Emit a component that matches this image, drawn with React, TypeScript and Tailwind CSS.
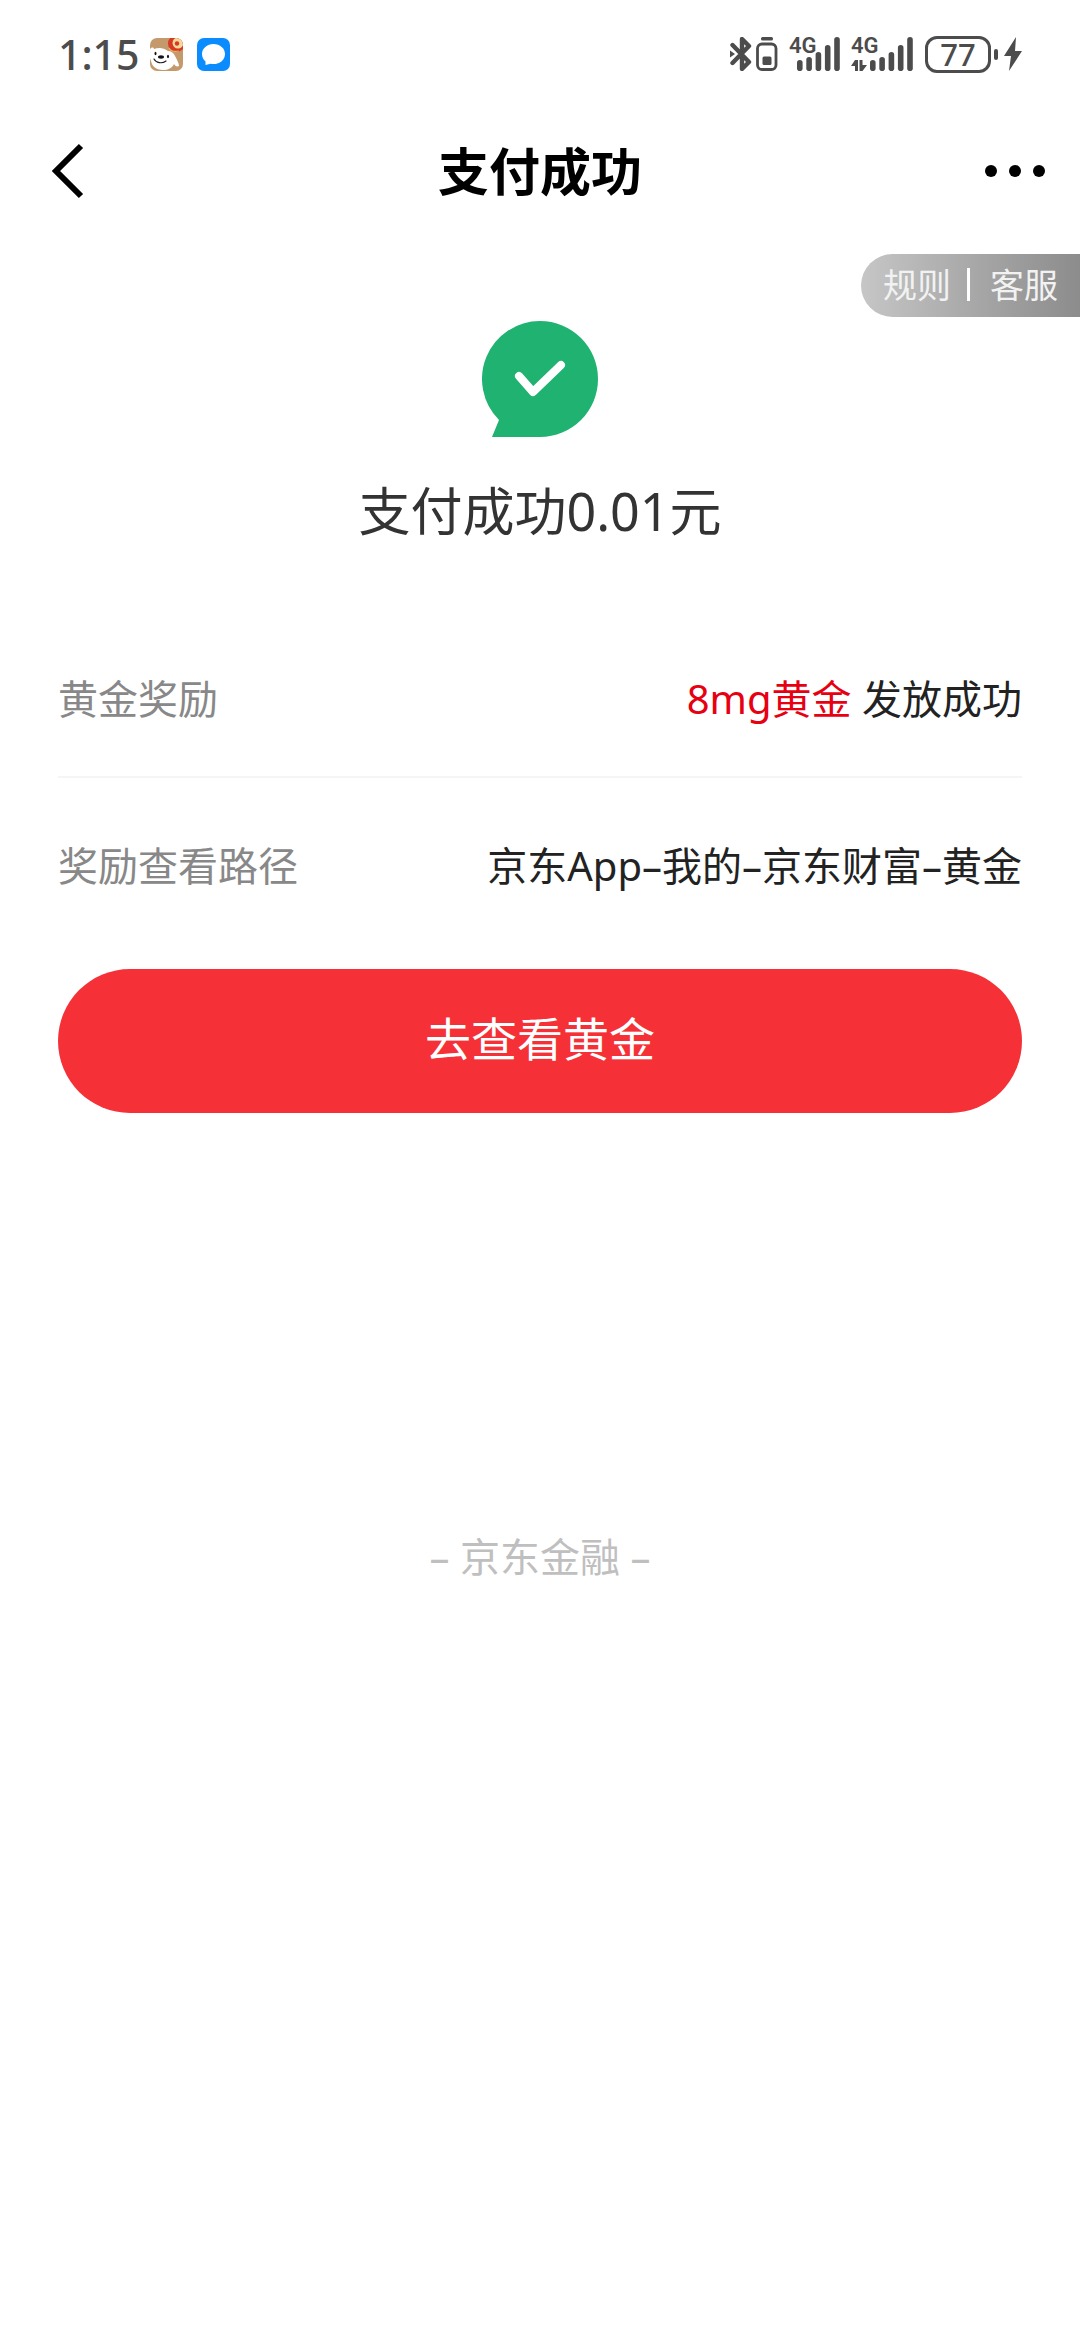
const SANS = "font-['Noto_Sans','Noto_Sans_CJK_SC',sans-serif]";

function DogAppIcon() {
  return (
    <svg viewBox="0 0 33 33" className="h-[33px] w-[33px]" aria-hidden="true">
      <defs>
        <clipPath id="dog-tile">
          <rect width="33" height="33" rx="7" />
        </clipPath>
      </defs>
      <g clipPath="url(#dog-tile)">
        <rect width="33" height="33" fill="#c49a6c" />
        <path
          d="M-1 13c1-3 4-5 5-2 5-2 10-1 14 2 3 0 6 2 7 5 2 4 4 7 4 10-2 1-4 0-5-2-2 4-6 6-11 6C7 32 2 29 1 23c-1-3-3-6-2-10z"
          fill="#fff"
        />
        <circle cx="26.500" cy="5.500" r="8.500" fill="#d63a22" />
        <circle cx="28" cy="5" r="5.500" fill="#f6d79c" />
        <circle cx="27" cy="5.500" r="2.200" fill="#d63a22" />
        <path d="M19 10c2 3 6 4 10 3" stroke="#f0b060" strokeWidth="1.200" fill="none" />
        <ellipse cx="11" cy="19" rx="3" ry="1.700" fill="#111" />
        <ellipse cx="5.500" cy="15.500" rx="1" ry="1.800" fill="#111" />
        <ellipse cx="18" cy="18.500" rx="1" ry="1.800" fill="#111" />
        <path d="M4 21c2 4 8 5 12 2" stroke="#222" strokeWidth="1.200" fill="none" strokeLinecap="round" />
      </g>
    </svg>
  );
}

function MessageAppIcon() {
  return (
    <svg viewBox="0 0 33 33" className="h-[33px] w-[33px]" aria-hidden="true">
      <rect width="33" height="33" rx="7" fill="#0a8cff" />
      <path
        d="M16.500 6C10 6 5 10.500 5 16c0 3.300 1.400 5.700 3.500 7.500V27l5-1.200c1 .2 2 .3 3 .3 6.500 0 11.500-4.500 11.500-10.100S23 6 16.500 6z"
        fill="#fff"
      />
    </svg>
  );
}

function BluetoothIcon() {
  return (
    <svg viewBox="0 0 22 34" className="h-[34px] w-[22px]" aria-hidden="true" fill="none">
      <path
        d="M2.500 8l16.500 17-7 7V2l7 7L2.500 26"
        stroke="#4c4c4c"
        strokeWidth="4.400"
        strokeLinecap="round"
        strokeLinejoin="round"
      />
      <path d="M0 13.500l5 3.500-5 3.500z" fill="#4c4c4c" />
    </svg>
  );
}

function DeviceBatteryIcon() {
  return (
    <svg viewBox="0 0 22 34" className="h-[34px] w-[22px]" aria-hidden="true">
      <rect x="5" y="0" width="12" height="3.500" rx="1.500" fill="#4c4c4c" />
      <rect x="1.500" y="7" width="18.500" height="25.500" rx="4.500" fill="none" stroke="#4c4c4c" strokeWidth="2.800" />
      <rect x="6.500" y="19.500" width="9" height="8.500" rx="1.500" fill="#4c4c4c" />
    </svg>
  );
}

function Signal({ data }: { data?: boolean }) {
  const tops = [23, 20, 15, 8, 0];
  const start = data ? 19 : 8;
  return (
    <div className={data ? "relative h-[34px] w-[62px]" : "relative h-[34px] w-[52px]"}>
      <svg viewBox={data ? "0 0 62 34" : "0 0 52 34"} className="h-full w-full" aria-hidden="true">
        {tops.map((t, i) => (
          <rect key={t} x={start + i * 9.3} y={t} width="5.600" height={34 - t} rx="2.800" fill="#4c4c4c" />
        ))}
        {data && <path d="M0 29l4-6h3v11H4v-5zM8.500 23h3v5H16l-4.500 6h-3z" fill="#4c4c4c" />}
      </svg>
      <span className="absolute -top-px left-0 font-['Roboto',sans-serif] text-[22px] leading-[20px] font-semibold">
        4G
      </span>
    </div>
  );
}

function StatusBar() {
  return (
    <div className="flex h-[108px] items-center justify-between px-[58px] text-[#4c4c4c]">
      <div className="flex items-center">
        <span className="text-[41px] leading-[48px] font-medium">1:15</span>
        <div className="ml-[10px] flex gap-[14px]">
          <DogAppIcon />
          <MessageAppIcon />
        </div>
      </div>
      <div className="flex items-center">
        <BluetoothIcon />
        <div className="ml-1">
          <DeviceBatteryIcon />
        </div>
        <div className="ml-[11px]">
          <Signal />
        </div>
        <div className="ml-[10px]">
          <Signal data />
        </div>
        <div className="ml-3 flex h-[37px] w-[66px] items-center justify-center rounded-[12px] border-3 border-[#4c4c4c] text-[31px] leading-[31px] font-medium">
          77
        </div>
        <div className="ml-[3px] h-[11px] w-1 rounded-full bg-[#4c4c4c]" />
        <svg viewBox="0 0 18 36" className="ml-[6px] h-[36px] w-[18px]" aria-hidden="true">
          <path d="M12 1L0 20h7L5 35l13-20h-7z" fill="#4c4c4c" />
        </svg>
      </div>
    </div>
  );
}

function Header() {
  return (
    <header className="grid h-[126px] grid-cols-[1fr_auto_1fr] items-center px-[35px] text-black">
      <button type="button" aria-label="返回" className="justify-self-start pl-4">
        <svg viewBox="0 0 34 56" className="h-[56px] w-[34px]" fill="none" aria-hidden="true">
          <path d="M30 3L5 28l25 25" stroke="#000" strokeWidth="6" />
        </svg>
      </button>
      <h1 className="text-[51px] leading-[60px] font-bold">支付成功</h1>
      <button type="button" aria-label="更多" className="flex gap-3 justify-self-end">
        <span className="h-3 w-3 rounded-full bg-black" />
        <span className="h-3 w-3 rounded-full bg-black" />
        <span className="h-3 w-3 rounded-full bg-black" />
      </button>
    </header>
  );
}

function SuccessIcon() {
  return (
    <svg viewBox="0 0 116 116" className="h-[116px] w-[116px]" fill="none" aria-hidden="true">
      <path d="M58 0A58 58 0 0 1 116 58A58 58 0 0 1 58 116H10L17 99A58 58 0 0 1 58 0z" fill="#20b270" />
      <path d="M37 55l14 16 28-27" stroke="#fff" strokeWidth="8" strokeLinecap="round" strokeLinejoin="round" />
    </svg>
  );
}

export default function App() {
  return (
    <div className={"flex min-h-screen flex-col bg-white " + SANS}>
      <StatusBar />
      <Header />
      <main className="flex flex-col">
        <div className="mt-5 flex h-[63px] items-center self-end rounded-l-full bg-linear-to-r from-[#c6c6c6] to-[#8c8c8c] px-[22px] pb-[2px] text-[34px] leading-[40px] text-[#f2f2f2]">
          <button type="button">规则</button>
          <span className="mr-[20px] ml-[16px] h-[33px] w-[3px] bg-white" />
          <button type="button">客服</button>
        </div>

        <section className="mt-1 flex flex-col items-center">
          <SuccessIcon />
          <p className="mt-[42px] text-[52px] leading-[64px] text-[#333]">支付成功0.01元</p>
        </section>

        <dl className="mx-[58px] mt-[128px] text-[40px] leading-[56px]">
          <div className="flex justify-between border-b-2 border-[#f5f5f5] pb-[49px]">
            <dt className="text-[#888]">黄金奖励</dt>
            <dd className="text-[#222]">
              <span className="text-[#e60012]">8mg黄金</span> 发放成功
            </dd>
          </div>
          <div className="flex justify-between pt-[60px]">
            <dt className="text-[#888]">奖励查看路径</dt>
            <dd className="text-[#222]">京东App–我的–京东财富–黄金</dd>
          </div>
        </dl>

        <button
          type="button"
          className="mx-[58px] mt-[75px] h-[144px] rounded-full bg-[#f53137] pb-[6px] text-[46px] leading-[60px] text-white"
        >
          去查看黄金
        </button>
      </main>
      <footer className="mt-[416px] text-center text-[40px] leading-[56px] text-[#bfbfbf]">– 京东金融 –</footer>
    </div>
  );
}
